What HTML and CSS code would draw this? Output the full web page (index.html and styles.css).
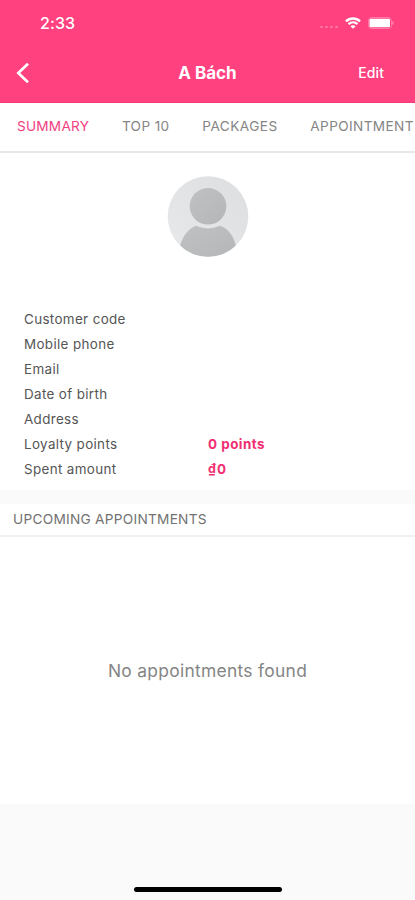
FILE: index.html
```html
<!DOCTYPE html>
<html lang="en">
<head>
<meta charset="utf-8">
<meta name="viewport" content="width=device-width, initial-scale=1">
<title>A Bách</title>
<link rel="stylesheet" href="styles.css">
</head>
<body>
<div class="screen">
  <header class="header">
    <div class="status">
      <span class="time">2:33</span>
      <div class="indicators">
        <span class="signal"><i></i><i></i><i></i><i></i></span>
        <svg class="wifi" width="16" height="12" viewBox="0 0 16 12" fill="none" stroke="#fff" stroke-width="2.3"><path d="M.9 4.4C4.9.5 11.1.5 15.1 4.4M3.5 7.2c2.6-2.4 6.4-2.4 9 0"/><path d="M5.4 9.2c1.5-1.4 3.7-1.4 5.2 0L8 11.8Z" fill="#fff" stroke="none"/></svg>
        <svg class="battery" width="27" height="12" viewBox="0 0 27 12"><rect x=".5" y=".5" width="23" height="11" rx="3" fill="none" stroke="#fff" stroke-opacity=".3"/><rect x="1.5" y="1.7" width="20.5" height="8.6" rx="1.2" fill="#fff"/><path d="M24.5 4c1.4.5 1.4 3.5 0 4Z" fill="#fff" fill-opacity=".55"/></svg>
      </div>
    </div>
    <div class="navbar">
      <svg class="back" width="14" height="22" viewBox="0 0 14 22" fill="none" stroke="#fff" stroke-width="2.7"><path d="M12 1.8 2.3 11 12 20.2"/></svg>
      <h1 class="title">A Bách</h1>
      <span class="edit">Edit</span>
    </div>
  </header>
  <nav class="tabs">
    <span class="tab tab-summary">SUMMARY</span>
    <span class="tab">TOP 10</span>
    <span class="tab tab-packages">PACKAGES</span>
    <span class="tab">APPOINTMENT</span>
  </nav>
  <section class="profile">
    <svg class="avatar" width="82" height="82" viewBox="0 0 82 82">
      <defs>
        <clipPath id="disc"><circle cx="41" cy="40.5" r="40.3"/></clipPath>
        <linearGradient id="disc-fill" x1="0" y1="1" x2="1" y2="0"><stop offset="0" stop-color="#e7e9eb"/><stop offset="1" stop-color="#dcdee0"/></linearGradient>
        <linearGradient id="person" x1="0" y1="0" x2="1" y2="1"><stop offset="0" stop-color="#bfc1c3"/><stop offset="1" stop-color="#b4b6b8"/></linearGradient>
      </defs>
      <g clip-path="url(#disc)">
        <rect width="82" height="82" fill="url(#disc-fill)"/>
        <circle cx="41" cy="30.3" r="18.3" fill="url(#person)"/>
        <path d="M13 71C15 59 23 52 29 49.8Q41 55 53 49.8C60 52 67 59 69 71V82H13Z" fill="url(#person)"/>
      </g>
    </svg>
    <dl class="details">
      <div class="row"><dt>Customer code</dt><dd></dd></div>
      <div class="row"><dt>Mobile phone</dt><dd></dd></div>
      <div class="row"><dt>Email</dt><dd></dd></div>
      <div class="row"><dt>Date of birth</dt><dd></dd></div>
      <div class="row"><dt>Address</dt><dd></dd></div>
      <div class="row"><dt>Loyalty points</dt><dd>0 points</dd></div>
      <div class="row"><dt>Spent amount</dt><dd><span class="currency">₫</span>0</dd></div>
    </dl>
  </section>
  <section class="upcoming">
    <h2 class="heading">UPCOMING APPOINTMENTS</h2>
    <p class="empty">No appointments found</p>
  </section>
  <footer class="footer"><div class="home"></div></footer>
</div>
</body>
</html>
```
FILE: styles.css
```css
* { box-sizing: border-box; }
body { margin: 0; font-family: Inter, "Liberation Sans", sans-serif; background: #fafafa; }
.screen { width: 415px; height: 900px; overflow: hidden; display: flex; flex-direction: column; background: #fafafa; }
.header { height: 103px; flex: none; background: #ff4180; color: #fff; border-bottom: 1px solid #f53c7a; }
.status { height: 46px; padding: 0 20px 0 40px; display: flex; align-items: center; justify-content: space-between; }
.time { font-size: 16px; font-weight: 500; line-height: 46px; letter-spacing: .1px; }
.indicators { display: flex; align-items: center; }
.signal { display: flex; gap: 2px; margin: 8px 7px 0 0; }
.signal i { width: 3px; height: 2px; border-radius: 1px; background: #ff74a2; }
.wifi { margin-right: 7px; }
.navbar { height: 54px; padding: 0 31px 0 16px; display: grid; grid-template-columns: 1fr auto 1fr; align-items: center; }
.title { margin: 0; font-size: 17px; font-weight: 700; line-height: 54px; letter-spacing: 0; transform: translateX(7.5px); }
.edit { justify-self: end; font-size: 14px; font-weight: 500; line-height: 20px; padding-bottom: 1px; letter-spacing: .1px; }
.tabs { height: 50px; flex: none; display: flex; align-items: center; gap: 32.7px; padding: 0 0 3px 17px; background: #fff; overflow: hidden; border-bottom: 2px solid #e8e8e8; color: #858585; font-size: 13.6px; }
.tab { white-space: nowrap; flex: none; letter-spacing: .38px; }
.tab-summary { color: #f0407f; letter-spacing: .25px; }
.tab-packages { letter-spacing: .48px; }
.profile { height: 337px; flex: none; padding-top: 23px; background: #fff; }
.avatar { display: block; margin: 0 auto; }
.details { margin: 49px 0 0; padding: 0 24px; font-size: 13.4px; line-height: 25px; letter-spacing: .36px; color: #555; }
.row { display: grid; grid-template-columns: 184px 1fr; height: 25px; }
.row dd { margin: 0; color: #f02f73; font-weight: 700; letter-spacing: .5px; }
.currency { font-size: 12.5px; line-height: 1; position: relative; top: -1.5px; letter-spacing: 1px; }
.upcoming { height: 300px; flex: none; margin-top: 14px; background: #fff; display: flex; flex-direction: column; }
.heading { margin: 0; height: 33px; padding-left: 13px; font-size: 13.7px; line-height: 30px; font-weight: 400; letter-spacing: .25px; color: #727272; border-bottom: 2px solid #f1f1f1; }
.empty { margin: 0; flex: 1; display: flex; align-items: center; justify-content: center; font-size: 17.4px; letter-spacing: .3px; color: #858585; }
.footer { flex: 1; display: flex; align-items: flex-end; justify-content: center; padding-bottom: 8px; }
.home { width: 148px; height: 5px; border-radius: 3px; background: #000; }
```
